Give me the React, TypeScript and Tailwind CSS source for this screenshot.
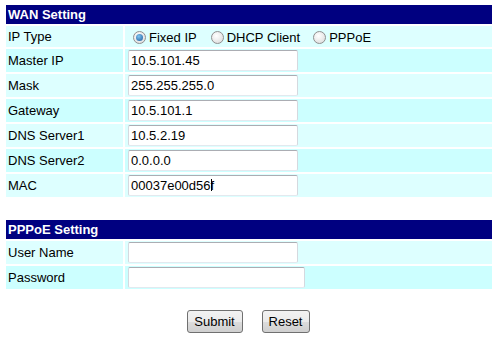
import React from 'react'

const FONT = "font-['Liberation_Sans',Arial,sans-serif]"

function Radio({ checked }: { checked?: boolean }) {
  return (
    <span className="ml-[5px] mr-[3px] inline-flex h-[13px] w-[13px] shrink-0 items-center justify-center rounded-full border border-[#8f8f8f] bg-[radial-gradient(circle_at_40%_35%,#ffffff,#d8d8d8)]">
      {checked && (
        <span className="h-[7px] w-[7px] rounded-full bg-[radial-gradient(circle_at_40%_35%,#7fc4f0,#1c5a9c)]" />
      )}
    </span>
  )
}

function TextBox({ value = '', wide, caret }: { value?: string; wide?: boolean; caret?: boolean }) {
  return (
    <div className="relative">
      <input
        readOnly
        value={value}
        className={`${wide ? 'w-[177px]' : 'w-[170px]'} h-[21px] rounded-[2px] border border-[#d5d9df] border-t-[#abadb3] border-b-[#e3e9ef] bg-white px-[2px] text-[13px] text-black outline-none ${FONT}`}
      />
      {caret && <span className="absolute left-[83px] top-[4px] h-[12px] w-px bg-black" />}
    </div>
  )
}

function Header({ title }: { title: string }) {
  return (
    <div className="col-span-2 flex h-[19px] items-center bg-[#000080] pl-[2px] text-[13px] font-bold text-white">
      {title}
    </div>
  )
}

function Row({ label, light, tall = true, children }: { label: string; light?: boolean; tall?: boolean; children: React.ReactNode }) {
  const bg = light ? 'bg-[#ddffff]' : 'bg-[#ccffff]'
  const h = tall ? 'h-[23px]' : 'h-[21px]'
  return (
    <>
      <div className={`${bg} ${h} flex items-center pl-[2px]`}>{label}</div>
      <div className={`${bg} ${h} flex items-center pl-[3px]`}>{children}</div>
    </>
  )
}

function Button({ children, w }: { children: React.ReactNode; w: string }) {
  return (
    <button
      className={`${w} h-[23px] rounded-[3px] border border-[#707070] bg-[linear-gradient(#f2f2f2_0%,#ebebeb_50%,#dddddd_50%,#cfcfcf_100%)] text-[13px] text-black`}
    >
      {children}
    </button>
  )
}

export default function App() {
  return (
    <div className={`h-[342px] w-[500px] overflow-hidden bg-white pl-[6px] pr-[8px] pt-[5px] text-[13px] text-black ${FONT}`}>
      {/* WAN */}
      <div className="grid grid-cols-[117px_1fr] gap-[2px]">
        <Header title="WAN Setting" />
        <Row label="IP Type" light tall={false}>
          <div className="flex items-center pt-[2px]">
            <Radio checked />
            <span>Fixed IP</span>
            <span className="w-[9px]" />
            <Radio />
            <span>DHCP Client</span>
            <span className="w-[8px]" />
            <Radio />
            <span>PPPoE</span>
          </div>
        </Row>
        <Row label="Master IP">
          <TextBox value="10.5.101.45" />
        </Row>
        <Row label="Mask" light>
          <TextBox value="255.255.255.0" />
        </Row>
        <Row label="Gateway">
          <TextBox value="10.5.101.1" />
        </Row>
        <Row label="DNS Server1" light>
          <TextBox value="10.5.2.19" />
        </Row>
        <Row label="DNS Server2">
          <TextBox value="0.0.0.0" />
        </Row>
        <Row label="MAC" light>
          <TextBox value="00037e00d56f" caret />
        </Row>
      </div>

      {/* PPPoE */}
      <div className="mt-[23px] grid grid-cols-[117px_1fr] gap-[2px]">
        <Header title="PPPoE Setting" />
        <Row label="User Name" light>
          <TextBox />
        </Row>
        <Row label="Password">
          <TextBox wide />
        </Row>
      </div>

      <div className="mt-[21px] flex justify-center gap-[19px] pr-[2px]">
        <Button w="w-[56px]">Submit</Button>
        <Button w="w-[48px]">Reset</Button>
      </div>
    </div>
  )
}
